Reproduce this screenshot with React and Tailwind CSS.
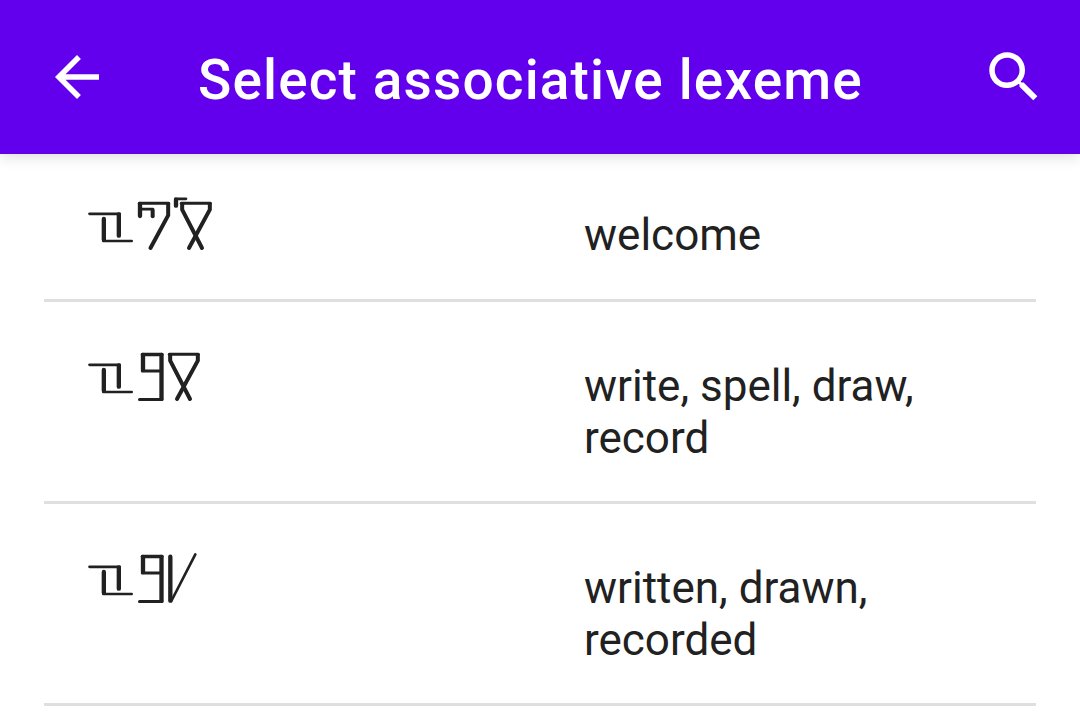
import React from "react";

// Syllable strokes of the constructed script: [path, stroke width]
const PREFIX = [
  ["M28.5 86.5H119", 8],
  ["M116.5 88V152", 13],
  ["M71.5 102V164", 13],
  ["M70 168H155", 8],
];
const NINE = [
  ["M189 57V102", 13],
  ["M187 55.5H246", 10],
  ["M187 105H243", 9],
  ["M244.5 57V188", 13],
  ["M178.5 190.5H246", 9],
];
const WELCOME = [
  ...PREFIX,
  ["M180 57V93", 13],
  ["M178 55H266", 9],
  ["M182 72.5H218", 8],
  ["M218 75V94", 12],
  ["M264.5 57V91L211.5 189", 12],
  ["M288 44V62", 13],
  ["M286 41.5H318", 8],
  ["M304 55H391", 9],
  ["M306.5 57V74L366 189", 12],
  ["M389.5 57V74L327 189", 12],
];
const WRITE = [
  ...PREFIX,
  ...NINE,
  ["M268 55H355", 9],
  ["M270.5 57V74L330 189", 12],
  ["M353.5 57V74L291 189", 12],
];
const WRITTEN = [
  ...PREFIX,
  ...NINE,
  ["M271 56V188", 13],
  ["M346 49L274 189", 8],
];

const rows = [
  { strokes: WELCOME, lines: ["welcome"], height: "h-[151px]" },
  { strokes: WRITE, lines: ["write, spell, draw,", "record"], height: "h-[202px]" },
  { strokes: WRITTEN, lines: ["written, drawn,", "recorded"], height: "h-[202px]" },
];

function Word({ strokes }) {
  return (
    <svg className="mt-[34px] h-[75px] w-[145px] shrink-0" viewBox="0 0 435 225" fill="none" stroke="#212121" strokeLinecap="round" strokeLinejoin="round">
      {strokes.map(([d, w], i) => (
        <path key={i} d={d} strokeWidth={w} />
      ))}
    </svg>
  );
}

export default function App() {
  return (
    <div className="flex h-[720px] w-[1080px] flex-col overflow-hidden bg-white font-['Roboto',sans-serif]">
      <header className="relative z-10 flex h-[154px] shrink-0 items-center bg-[#6200ee] pr-[33px] pl-11 text-white shadow-[0_2px_14px_rgba(0,0,0,0.15)]">
        <button aria-label="Back" className="flex size-[66px]">
          <svg className="size-[66px]" viewBox="0 0 24 24" fill="currentColor">
            <path d="M20 11H7.83l5.59-5.59L12 4l-8 8 8 8 1.41-1.41L7.83 13H20v-2z" />
          </svg>
        </button>
        <h1 className="ml-[88px] flex-1 pt-[6px] text-[55px] leading-[64px] font-medium tracking-[1.13px] whitespace-nowrap">
          Select associative lexeme
        </h1>
        <button aria-label="Search" className="flex size-[66px]">
          <svg className="size-[66px]" viewBox="0 0 24 24" fill="currentColor">
            <path d="M15.5 14h-.79l-.28-.27C15.41 12.59 16 11.11 16 9.5 16 5.91 13.09 3 9.5 3S3 5.91 3 9.5 5.91 16 9.5 16c1.61 0 3.09-.59 4.23-1.57l.27.28v.79l5 4.99L20.49 19l-4.99-5zm-6 0C7.01 14 5 11.99 5 9.5S7.01 5 9.5 5 14 7.01 14 9.5 11.99 14 9.5 14z" />
          </svg>
        </button>
      </header>
      <main className="-mt-[3px] px-11">
        {rows.map(({ strokes, lines, height }) => (
          <div key={lines[0]} className={`grid grid-cols-2 border-b-[3px] border-[#dfdfdf] pl-9 ${height}`}>
            <Word strokes={strokes} />
            <p className="pt-[58px] pl-[26px] text-[44px] leading-[52px] whitespace-nowrap text-[#212121]">
              {lines.map((line) => (
                <span key={line} className="block">{line}</span>
              ))}
            </p>
          </div>
        ))}
      </main>
    </div>
  );
}
